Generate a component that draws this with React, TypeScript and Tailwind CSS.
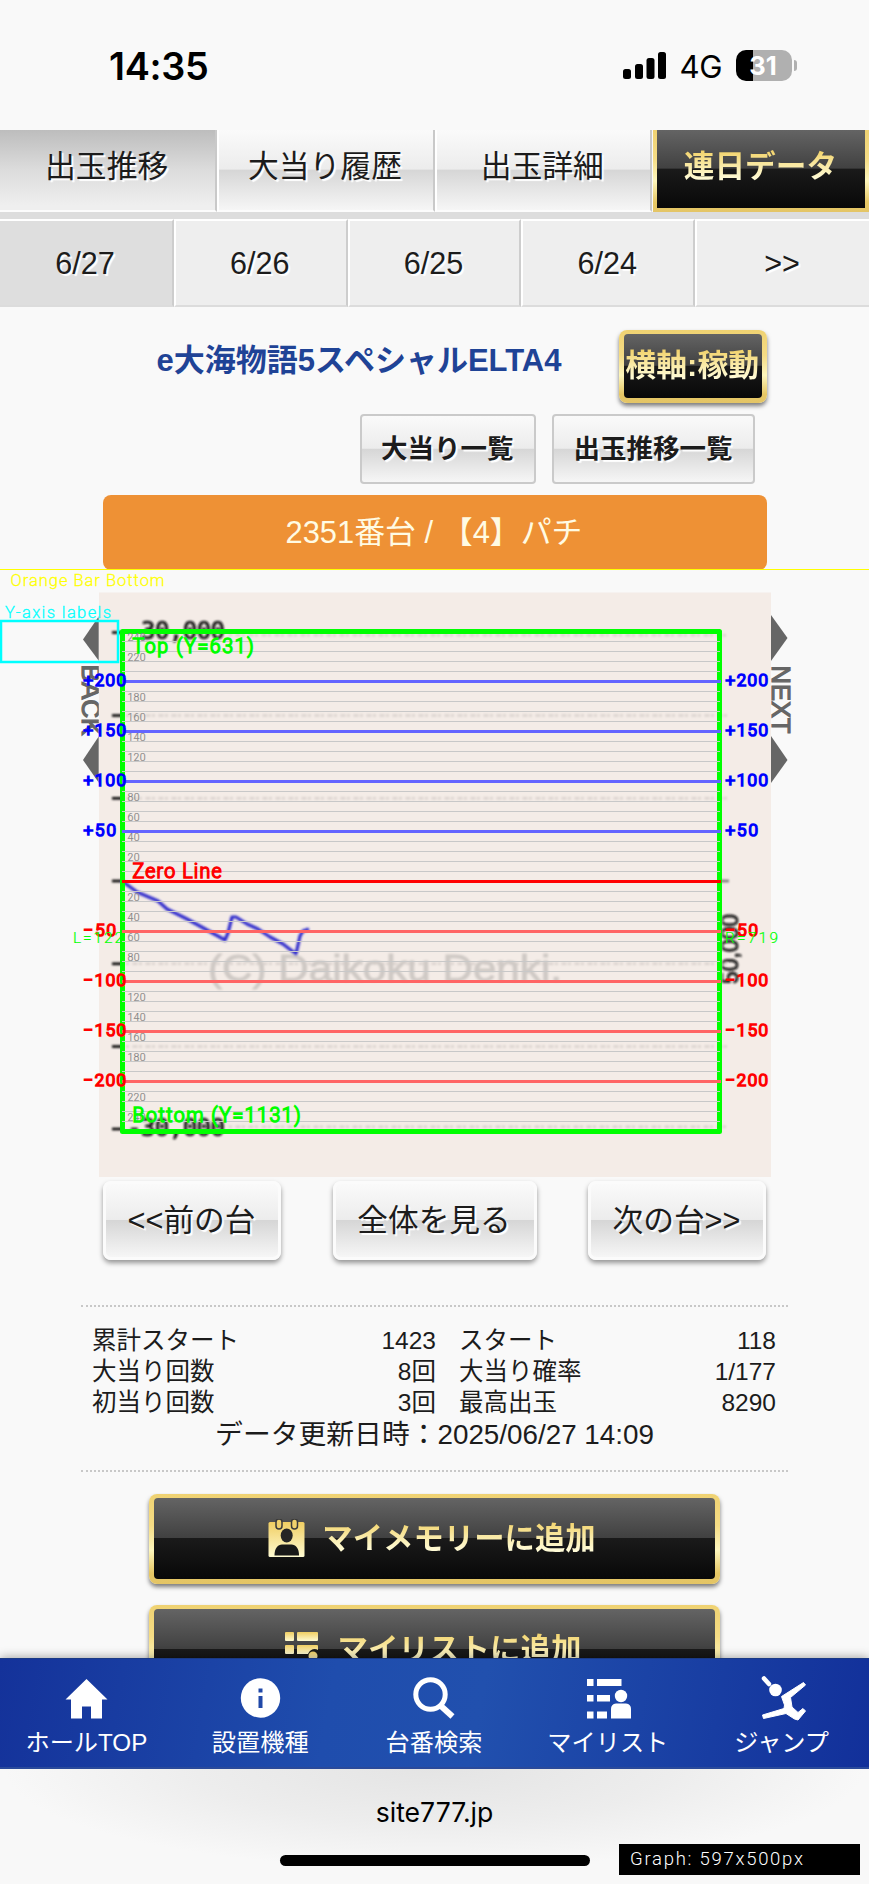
import type { ReactNode } from "react";

const glossy =
  "bg-[linear-gradient(180deg,#fafafa_0%,#ececec_49%,#d6d6d6_50%,#f6f6f6_100%)]";
const blackGloss =
  "bg-[linear-gradient(180deg,#646464_0%,#414141_49%,#1a1a1a_50%,#080808_100%)]";
const goldFrame =
  "bg-[linear-gradient(180deg,#efd272_0%,#f5dc85_35%,#fdf6bd_62%,#e6c765_88%,#e4c566_100%)]";
const goldText =
  "bg-[linear-gradient(180deg,#f2d36c_10%,#f9e9a4_45%,#fffbd6_80%)] bg-clip-text text-transparent";
const textShadow = "[text-shadow:2px_2px_1px_#ffffff]";

function Tab({ label, active }: { label: string; active?: boolean }) {
  return (
    <div
      className={`flex w-[217.3px] items-center justify-center border-r-2 border-b-2 border-r-[#c9c9c9] border-b-[#fcfcfc] pr-[2px] pb-[6px] text-[30.8px] leading-none ${textShadow} ${
        active
          ? "bg-[linear-gradient(180deg,#bdbdbd_0%,#dcdcdc_50%,#efefef_95%)]"
          : `border-l-2 border-l-white ${glossy}`
      }`}
    >
      {label}
    </div>
  );
}

function DateCell({ label, active }: { label: string; active?: boolean }) {
  return (
    <div
      className={`flex w-1/5 items-center justify-center border-t-2 border-r-2 border-b-2 border-t-white border-r-[#cdcdcd] border-b-[#dcdcdc] pr-[2px] text-[30.6px] leading-none last:border-r-0 ${textShadow} ${
        active ? "bg-[#dedede]" : "border-l-2 border-l-white bg-[#eeeeee]"
      }`}
    >
      {label}
    </div>
  );
}

function GoldButton({ className, children }: { className: string; children: ReactNode }) {
  return (
    <div
      className={`rounded-[8px] px-[5px] pt-[4.5px] pb-[5px] shadow-[0_3px_4px_rgba(0,0,0,0.5)] ${goldFrame} ${className}`}
    >
      <div className={`flex h-full items-center justify-center rounded-[4px] whitespace-nowrap ${blackGloss}`}>
        {children}
      </div>
    </div>
  );
}

function SilverButton({ className, label }: { className: string; label: string }) {
  return (
    <div
      className={`flex h-[79px] items-center justify-center rounded-[8px] border-[3px] border-[#fbfbfb] pt-[2px] pr-[1px] text-[30.7px] leading-none whitespace-nowrap shadow-[0_3px_5px_rgba(0,0,0,0.4)] ${textShadow} ${glossy} ${className}`}
    >
      {label}
    </div>
  );
}

const ZERO = 881;

function Vec({
  x,
  y,
  w,
  size,
  fill,
  stroke = 0,
  children,
}: {
  x: number;
  y: number;
  w: number;
  size: number;
  fill: string;
  stroke?: number;
  children: string;
}) {
  return (
    <text
      x={x}
      y={y}
      textLength={w}
      lengthAdjust="spacing"
      fontSize={size}
      fill={fill}
      stroke={fill}
      strokeWidth={stroke}
      fontFamily="Roboto, 'Liberation Sans', sans-serif"
      fontWeight={300}
    >
      {children}
    </text>
  );
}

function Chart() {
  const steps = Array.from({ length: 49 }, (_, i) => (i - 24) * 10);
  const minor = steps.filter((v) => v % 50 !== 0);
  const major = [200, 150, 100, 50, -50, -100, -150, -200];
  const small = steps.filter((v) => v % 20 === 0 && v % 100 !== 0);
  const ticks = [632.5, 715.5, 798.3, 881, 963.8, 1046.5, 1129];
  const dotted = [635.3, 715.5, 798.3, 963.8, 1046.5, 1126.7];
  return (
    <svg
      className="relative z-10 block h-[607px] w-[869px] shrink-0 overflow-visible"
      viewBox="0 570 869 607"
    >
      <defs>
        <filter id="soft" x="-10%" y="-30%" width="120%" height="160%">
          <feGaussianBlur stdDeviation="0.8" />
        </filter>
        <clipPath id="left">
          <rect x="60" y="600" width="38.7" height="200" />
        </clipPath>
        <clipPath id="right">
          <rect x="771" y="600" width="50" height="200" />
        </clipPath>
        <clipPath id="plotRight">
          <rect x="722" y="880" width="40" height="120" />
        </clipPath>
      </defs>
      <rect x="99" y="592.5" width="672" height="584.5" fill="#f4ece7" />

      <g fill="#666" clipPath="url(#left)">
        <path d="M99 616L83 639.5L99 661Z" />
        <path d="M99 736L83 760L99 783Z" />
        <text transform="translate(81.5 664.5) rotate(90)" fontSize="26" fontFamily="Liberation Sans, sans-serif" stroke="#666" strokeWidth="1.2" textLength="71" lengthAdjust="spacingAndGlyphs">
          BACK
        </text>
      </g>
      <g fill="#666" clipPath="url(#right)">
        <path d="M771 615L787.5 638L771 661Z" />
        <path d="M771 736L787.5 760L771 783Z" />
        <text transform="translate(771.5 665.5) rotate(90)" fontSize="25" fontFamily="Liberation Sans, sans-serif" stroke="#666" strokeWidth="1.2" textLength="68" lengthAdjust="spacingAndGlyphs">
          NEXT
        </text>
      </g>

      <g filter="url(#soft)">
        {dotted.map((y, i) => (
          <path
            key={y}
            d={`M${i === 0 || i === 5 ? 229 : 126} ${y}H729`}
            stroke="#dad2ce"
            strokeWidth="2.5"
            strokeDasharray="3 3.5 5 1.5"
          />
        ))}
        {ticks.map((y) => (
          <path key={y} d={`M112 ${y}H122`} stroke="#000" strokeWidth="2.6" />
        ))}
        <path d="M720 881H729" stroke="#777" strokeWidth="2.6" />
        <g fontFamily="DejaVu Sans Mono, monospace" fill="#111" stroke="#111" strokeWidth="0.7" fontSize="24">
          <text x="141" y="639" textLength="84">30,000</text>
          <text x="127" y="1135.5" textLength="98">-30,000</text>
        </g>
        <g clipPath="url(#plotRight)">
          <text
            transform="translate(737.5 984) rotate(-90)"
            fontFamily="Liberation Sans, sans-serif"
            fill="#111"
            stroke="#111"
            strokeWidth="0.8"
            fontSize="23"
            textLength="70"
            lengthAdjust="spacingAndGlyphs"
          >
            50,000
          </text>
        </g>
        <text
          x="208"
          y="981"
          fontFamily="Liberation Sans, sans-serif"
          fontSize="36"
          fill="#cfc9c5"
          stroke="#cfc9c5"
          strokeWidth="0.8"
          textLength="354"
          lengthAdjust="spacingAndGlyphs"
        >
          (C) Daikoku Denki.
        </text>
        <path
          d="M122 881L137 892L158 901L167 909L187 919L207 930L225 940L228 933L232 917L236 917L247 924L258 929L270 937L283 944L296 954L300 936L303 931L309 929"
          fill="none"
          stroke="#2f2bcc"
          strokeWidth="3.2"
          strokeLinejoin="round"
        />
      </g>

      {/* calibration overlay */}
      <path d="M0 569.5H869" stroke="#ffff00" strokeWidth="1" shapeRendering="crispEdges" />
      <Vec x={10.5} y={586} w={154} size={16.5} fill="#ffff00" stroke={0.3}>Orange Bar Bottom</Vec>
      <rect x="1" y="621" width="117" height="41" fill="none" stroke="#00ffff" strokeWidth="2.5" />
      <Vec x={5} y={617.5} w={106} size={16.5} fill="#00ffff" stroke={0.3}>Y-axis labels</Vec>

      <rect x="122.5" y="631.5" width="597" height="500" fill="none" stroke="#00ff00" strokeWidth="5" strokeLinejoin="round" />
      <g shapeRendering="crispEdges">
        {minor.map((v) => (
          <path key={v} d={`M122 ${ZERO - v + 0.5}H720`} stroke="#c8c8c8" strokeWidth="1" />
        ))}
        {major.map((v) => (
          <path key={v} d={`M122 ${ZERO - v + 0.5}H721`} stroke={v > 0 ? "#6464ff" : "#ff6464"} strokeWidth="3" />
        ))}
        <path d={`M122 ${ZERO + 0.5}H721`} stroke="#ff0000" strokeWidth="3" />
      </g>
      {small.map((v) => (
        <Vec key={v} x={127.5} y={ZERO - v - 0.5} w={Math.abs(v) > 99 ? 18 : 12} size={10.5} fill="#858585" stroke={0.2}>
          {String(Math.abs(v))}
        </Vec>
      ))}
      {major.map((v) => {
        const label = v > 0 ? `+${v}` : `−${-v}`;
        const w = Math.abs(v) > 99 ? 42.5 : 32.5;
        const y = ZERO - v + 5;
        const fill = v > 0 ? "#0000ff" : "#ff0000";
        return (
          <g key={v}>
            <Vec x={83.5} y={y} w={w} size={17} fill={fill} stroke={1.7}>{label}</Vec>
            <Vec x={725.5} y={y} w={w} size={17} fill={fill} stroke={1.7}>{label}</Vec>
          </g>
        );
      })}
      <Vec x={132.5} y={652.5} w={121} size={19.5} fill="#00ff00" stroke={1.5}>Top (Y=631)</Vec>
      <Vec x={132.5} y={1122} w={168} size={19.5} fill="#00ff00" stroke={1.5}>Bottom (Y=1131)</Vec>
      <Vec x={132.5} y={877.5} w={89} size={19.5} fill="#ff0000" stroke={1.5}>Zero Line</Vec>
      <Vec x={73} y={943} w={50} size={15.5} fill="#00ff00" stroke={0.2}>L=122</Vec>
      <Vec x={725} y={943} w={53} size={15.5} fill="#00ff00" stroke={0.2}>R=719</Vec>
    </svg>
  );
}

function Stat({ label, value }: { label: string; value: string }) {
  return (
    <div className="flex justify-between">
      <span>{label}</span>
      <span>{value}</span>
    </div>
  );
}

function NavItem({ label, children }: { label: string; children: ReactNode }) {
  return (
    <div className="flex w-1/5 flex-col items-center pt-[14px] pr-[1px]">
      <svg className="h-[48px] w-[48px]" viewBox="0 0 48 48" fill="#fff">
        {children}
      </svg>
      <span className="mt-[10px] text-[24.2px] leading-[24px] whitespace-nowrap text-white">{label}</span>
    </div>
  );
}

export default function App() {
  return (
    <div className="flex h-[1884px] w-[869px] flex-col overflow-hidden bg-[#f9f9f9] font-['Liberation_Sans','Noto_Sans_CJK_JP',sans-serif] text-[#1c1c1c]">
      <header className="flex h-[130px] shrink-0 items-start justify-between pt-[48.5px] pr-[72px] pl-[109px] text-black">
        <div className="font-['Inter',sans-serif] text-[37.8px] leading-[34px] font-semibold tracking-[-0.3px]">14:35</div>
        <div className="flex items-center">
          <svg className="h-[34px] w-[45px]" viewBox="0 0 45 34">
            <rect x="1" y="20" width="8" height="10" rx="2.5" />
            <rect x="13" y="15" width="8" height="15" rx="2.5" />
            <rect x="24.5" y="9" width="8" height="21" rx="2.5" />
            <rect x="36" y="3" width="8" height="27" rx="2.5" />
          </svg>
          <span className="ml-[13px] pt-[2px] font-['Inter',sans-serif] text-[31.2px] leading-[32px] tracking-[-0.5px]">4G</span>
          <div className="ml-[14px] flex h-[31px] w-[56px] items-center justify-center overflow-hidden rounded-[10px] bg-[linear-gradient(90deg,#000_0,#000_17px,#b0b0b0_17px)] font-['Inter',sans-serif] text-[25.500px] leading-none font-bold text-white">
            <span className="pr-[2px]">31</span>
          </div>
          <div className="ml-[1.5px] h-[11px] w-[3.5px] rounded-r-full bg-[#b0b0b0]" />
        </div>
      </header>

      <nav className="flex h-[82px] shrink-0">
        <Tab label="出玉推移" active />
        <Tab label="大当り履歴" />
        <Tab label="出玉詳細" />
        <div className={`ml-[1px] flex-1 px-[4.5px] pb-[4px] ${goldFrame}`}>
          <div className={`flex h-full items-center justify-center pr-[1px] pb-[4px] ${blackGloss}`}>
            <span className={`text-[30.7px] leading-[40px] font-bold ${goldText}`}>連日データ</span>
          </div>
        </div>
      </nav>
      <div className="h-[7px] shrink-0 bg-[#dddddd]" />
      <div className="flex h-[88px] shrink-0">
        <DateCell label="6/27" active />
        <DateCell label="6/26" />
        <DateCell label="6/25" />
        <DateCell label="6/24" />
        <DateCell label=">>" />
      </div>

      <section className="flex h-[263px] shrink-0 flex-col pr-[102px] pl-[103px]">
        <div className="mt-[22.5px] flex h-[73.5px] justify-end">
          <h1 className="mt-[11px] mr-[57px] text-[31px] leading-[40px] font-bold whitespace-nowrap text-[#1f4396]">
            e大海物語5スペシャルELTA4
          </h1>
          <GoldButton className="w-[148.5px]">
            <span className={`pr-[1px] text-[30.9px] leading-[40px] font-bold ${goldText}`}>横軸:稼動</span>
          </GoldButton>
        </div>
        <div className="mt-[11px] mr-[12px] flex h-[70px] justify-end gap-4">
          {["大当り一覧", "出玉推移一覧"].map((label) => (
            <div
              key={label}
              className={`flex items-center justify-center rounded-[4px] border-2 border-[#cacaca] pr-[20.5px] pl-[19.5px] text-[26.500px] leading-none font-bold ${textShadow} ${glossy}`}
            >
              {label}
            </div>
          ))}
        </div>
        <div className="mt-[11px] flex h-[75px] items-center justify-center rounded-[8px] bg-[#ee9135] pt-[2px] pr-[2px] text-[30.9px] leading-none whitespace-nowrap text-[#fffbe3]">
          2351番台 / 【4】パチ
        </div>
      </section>

      <Chart />

      <div className="mt-[4px] flex h-[79px] shrink-0 justify-between pr-[103px] pl-[103px]">
        <SilverButton className="w-[178px]" label="<<前の台" />
        <SilverButton className="w-[204px]" label="全体を見る" />
        <SilverButton className="w-[178px]" label="次の台>>" />
      </div>

      <section className="mx-[81px] mt-[44.5px] h-[167px] shrink-0 border-y-2 border-dotted border-[#c8c8c8] pr-[11px] pl-[11px] pt-[18px] text-[24.5px] leading-[31px]">
        <div className="grid grid-cols-[344px_317px] gap-x-[23px]">
          <Stat label="累計スタート" value="1423" />
          <Stat label="スタート" value="118" />
          <Stat label="大当り回数" value="8回" />
          <Stat label="大当り確率" value="1/177" />
          <Stat label="初当り回数" value="3回" />
          <Stat label="最高出玉" value="8290" />
        </div>
        <div className="text-center text-[27.8px] leading-[33px]">データ更新日時：2025/06/27 14:09</div>
      </section>

      <div className="mt-[21px] flex h-[165.5px] shrink-0 flex-col items-center gap-[21px] overflow-hidden pt-[1px]">
        <GoldButton className="h-[90px] w-[571px] shrink-0">
          <svg className="mr-[17px] h-[38px] w-[37px]" viewBox="0 0 37 38">
            <defs>
              <linearGradient id="gold" x1="0" y1="0" x2="0" y2="1">
                <stop offset="0" stopColor="#f0ce62" />
                <stop offset="1" stopColor="#fffbd2" />
              </linearGradient>
            </defs>
            <rect x="0.5" y="3" width="36" height="35" rx="1.5" fill="url(#gold)" />
            <rect x="8" y="0" width="6" height="10" rx="3" fill="#f0d16c" stroke="#3a3a3a" strokeWidth="1.5" />
            <rect x="23.5" y="0" width="6" height="10" rx="3" fill="#f0d16c" stroke="#3a3a3a" strokeWidth="1.5" />
            <ellipse cx="18.7" cy="16.5" rx="6" ry="7" fill="#252525" />
            <path d="M6.5 36.5C6.5 29 10 25.5 14 25.5H23.5C27.5 25.5 31 29 31 36.5Z" fill="#181818" />
          </svg>
          <span className={`mr-[5px] text-[30.4px] leading-[40px] font-bold ${goldText}`}>マイメモリーに追加</span>
        </GoldButton>
        <GoldButton className="h-[90px] w-[571px] shrink-0">
          <svg className="mt-[3px] mr-[20px] h-[38px] w-[33px]" viewBox="0 0 33 38" fill="url(#gold)">
            <rect x="0" y="0" width="9" height="9" rx="1" />
            <rect x="12" y="0" width="21" height="9" rx="1" />
            <rect x="0" y="13" width="9" height="9" rx="1" />
            <path d="M12 14Q12 13 13 13H32Q33 13 33 14V18C30 16 25 17 23 22H12Z" />
            <circle cx="28" cy="24" r="4.5" />
            <rect x="0" y="26" width="9" height="9" rx="1" />
            <rect x="12" y="26" width="8" height="9" rx="1" />
          </svg>
          <span className={`mr-[3px] text-[30.5px] leading-[40px] font-bold ${goldText}`}>マイリストに追加</span>
        </GoldButton>
      </div>

      <nav className="relative flex h-[111px] shrink-0 border-t border-b-2 border-t-[#1b3a86] border-b-[#2a4a9a] bg-[linear-gradient(100deg,#14329a_0%,#1f4dad_38%,#2150ae_55%,#12309a_100%)] shadow-[0_0_10px_rgba(0,0,0,0.4)]">
        <NavItem label="ホールTOP">
          <path d="M24.5 6L45.5 26.5H40V45.5H29V33.5H20V45.5H9V26.5H3.5Z" />
        </NavItem>
        <NavItem label="設置機種">
          <circle cx="24.5" cy="25" r="19.7" />
          <path d="M22.5 15.5h4v4h-4zM22.5 23h4v12h-4z" fill="#2048a8" />
        </NavItem>
        <NavItem label="台番検索">
          <circle cx="20.5" cy="21.5" r="14.7" fill="none" stroke="#fff" strokeWidth="5" />
          <path d="M31.5 33.5L42.5 43.5" stroke="#fff" strokeWidth="6" />
        </NavItem>
        <NavItem label="マイリスト">
          <path d="M3 6h6.500v7H3zM13 6H37.500v7h-24.500zM3 22h6.500v6.500H3zM13 22H26v6.500H13zM3 38.500h6.500v7H3zM13 38.500h10v7h-10z" />
          <circle cx="37" cy="23" r="6.2" />
          <path d="M27 45.5V36Q27 31 32 30.5H42Q47 31 47 36V45.5Z" />
        </NavItem>
        <NavItem label="ジャンプ">
          <circle cx="17.5" cy="17" r="6.3" />
          <path d="M6 5.5L11 11" stroke="#fff" strokeWidth="4.5" strokeLinecap="round" />
          <path d="M45.5 9.5L47.500 12L32.5 24.5L34 34L40 39.500L45 35.500L47.500 38L40 47L36.500 46L28 40.500L5.500 45.500L4.500 42L26 35.500L26.500 32L23.500 23.500Z" strokeLinejoin="round" stroke="#fff" strokeWidth="1" />
        </NavItem>
      </nav>

      <footer className="relative flex flex-1 flex-col items-center bg-[radial-gradient(ellipse_430px_100px_at_50%_0%,#e4e4e4_0%,#ededed_55%,#f8f8f8_100%)]">
        <div className="mt-[27px] font-['Inter',sans-serif] text-[26.6px] leading-[32px] text-black">site777.jp</div>
        <div className="mt-[27px] h-[11px] w-[310px] rounded-full bg-black" />
        <svg className="absolute top-[75px] left-[619px] h-[31px] w-[241px] bg-black" viewBox="0 0 241 31">
          <Vec x={11} y={20.5} w={173} size={18.5} fill="#ffffff">Graph: 597x500px</Vec>
        </svg>
      </footer>
    </div>
  );
}
